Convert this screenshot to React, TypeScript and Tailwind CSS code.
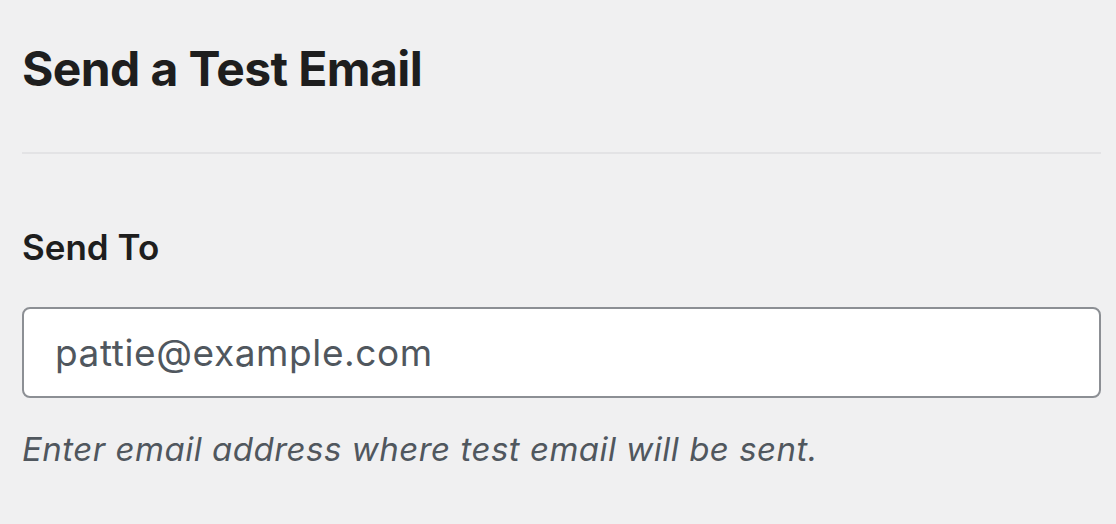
export default function App() {
  return (
    <div className="min-h-[524px] w-[1116px] bg-[#f0f0f1] pl-[22px] pr-[15px] pt-[40px] font-['Inter',sans-serif] text-[#1e1e1e]">
      <h2 className="text-[48px] font-bold leading-[58px] tracking-[-0.6px]">Send a Test Email</h2>
      <div className="mt-[54px] h-[2px] bg-[#e3e3e5]" />
      <div className="mt-[72px]">
        <label className="block text-[35px] font-semibold leading-[42px]">Send To</label>
        <input
          type="text"
          defaultValue="pattie@example.com"
          className="mt-[39px] block h-[91px] w-full rounded-[8px] border-2 border-[#8c8f94] bg-white pl-[31px] pr-[16px] text-[37px] tracking-[0.6px] text-[#50575e] outline-none"
        />
        <p className="mt-[31px] text-[33px] italic leading-[40px] tracking-[0.5px] text-[#50575e]">
          Enter email address where test email will be sent.
        </p>
      </div>
    </div>
  );
}
